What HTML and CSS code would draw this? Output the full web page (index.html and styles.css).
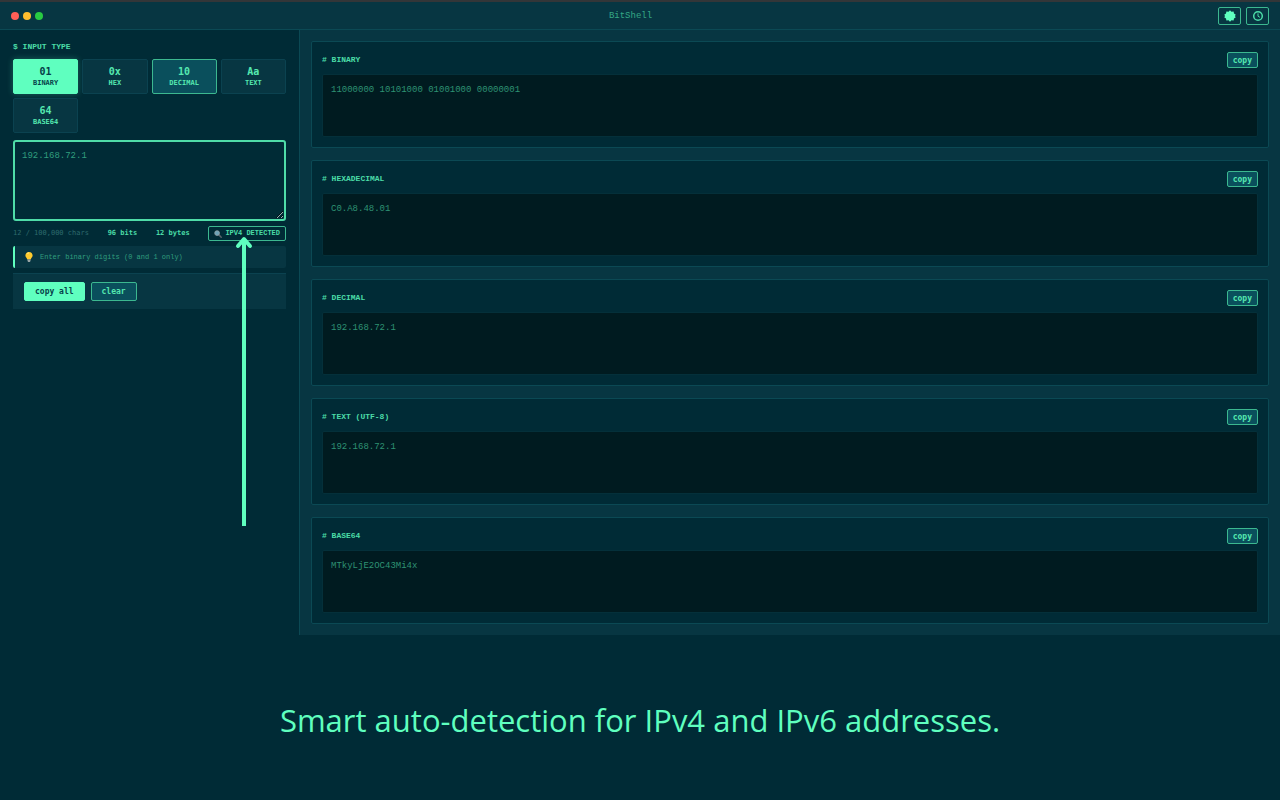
FILE: index.html
```html
<!DOCTYPE html>
<html lang="en">
<head>
    <meta charset="UTF-8">
    <meta name="viewport" content="width=device-width, initial-scale=1.0">
    <title>BitShell</title>
    <link rel="stylesheet" href="styles.css">
</head>
<body>
    <div class="window">
        <header class="titlebar">
            <div class="lights">
                <span class="light red"></span>
                <span class="light yellow"></span>
                <span class="light green"></span>
            </div>
            <h1 class="app-name">BitShell</h1>
            <div class="tools">
                <button class="tool" aria-label="Settings">
                    <svg width="12" height="12" viewBox="0 0 12 12"><path d="M6 .2 7.4 1.8 9.6 1.4 10 3.6 11.8 4.8 10.9 6 11.8 7.2 10 8.4 9.6 10.6 7.4 10.2 6 11.8 4.6 10.2 2.4 10.6 2 8.4.2 7.2 1.1 6 .2 4.8 2 3.6 2.4 1.4 4.6 1.8Z" fill="#5fffbf"/></svg>
                </button>
                <button class="tool" aria-label="History">
                    <svg width="12" height="12" viewBox="0 0 12 12" fill="none" stroke="#4bdca7"><circle cx="6" cy="6" r="4.3" stroke-width="1.5"/><path d="M6 3.4V6.2L7.9 7.3" stroke-width="1"/></svg>
                </button>
            </div>
        </header>

        <div class="content">
            <aside class="sidebar">
                <h2 class="label">$ INPUT TYPE</h2>
                <div class="types">
                    <button class="type active"><b>01</b><span>BINARY</span></button>
                    <button class="type"><b>0x</b><span>HEX</span></button>
                    <button class="type suggested"><b>10</b><span>DECIMAL</span></button>
                    <button class="type"><b>Aa</b><span>TEXT</span></button>
                    <button class="type"><b>64</b><span>BASE64</span></button>
                </div>
                <textarea class="input" aria-label="Input" spellcheck="false">192.168.72.1</textarea>
                <div class="stats">
                    <span class="chars">12 / 100,000 chars</span>
                    <span class="count">96 bits</span>
                    <span class="count">12 bytes</span>
                    <span class="badge">
                        <svg width="8" height="8" viewBox="0 0 8 8"><path d="M4.9 4.9 7.2 7.2" stroke="#59646b" stroke-width="1.5" stroke-linecap="round"/><circle cx="3.1" cy="3.1" r="2.4" fill="#6ba3b8" stroke="#96a5aa" stroke-width=".8"/></svg>
                        IPV4 DETECTED
                    </span>
                </div>
                <div class="hint">
                    <svg width="8" height="10" viewBox="0 0 8 10"><path d="M4 0C1.8 0 .4 1.6.4 3.5.4 5.2 2 6 2.3 7.5H5.7C6 6 7.6 5.2 7.6 3.5 7.6 1.6 6.2 0 4 0Z" fill="#ffcb2e"/><path d="M2.2 1.5Q3 .8 4 1" stroke="#fff3a8" stroke-width=".8" fill="none"/><path d="M2.5 7.5H5.5V9L4.8 10H3.2L2.5 9Z" fill="#9aa5a5"/></svg>
                    <span>Enter binary digits (0 and 1 only)</span>
                </div>
                <div class="actions">
                    <button class="btn primary">copy all</button>
                    <button class="btn">clear</button>
                </div>
            </aside>

            <main class="results">
                <section class="card">
                    <div class="card-head"><h2 class="label"># BINARY</h2><button class="copy">copy</button></div>
                    <div class="output">11000000 10101000 01001000 00000001</div>
                </section>
                <section class="card">
                    <div class="card-head"><h2 class="label"># HEXADECIMAL</h2><button class="copy">copy</button></div>
                    <div class="output">C0.A8.48.01</div>
                </section>
                <section class="card">
                    <div class="card-head"><h2 class="label"># DECIMAL</h2><button class="copy">copy</button></div>
                    <div class="output">192.168.72.1</div>
                </section>
                <section class="card">
                    <div class="card-head"><h2 class="label"># TEXT (UTF-8)</h2><button class="copy">copy</button></div>
                    <div class="output">192.168.72.1</div>
                </section>
                <section class="card">
                    <div class="card-head"><h2 class="label"># BASE64</h2><button class="copy">copy</button></div>
                    <div class="output">MTkyLjE2OC43Mi4x</div>
                </section>
            </main>
        </div>

        <svg class="arrow" width="18" height="290" viewBox="0 0 18 290" fill="none" stroke="#5fffbf" stroke-width="4"><path d="M9 290V3"/><path d="M3 10 9 3 15 10" stroke-linecap="round" stroke-linejoin="round"/></svg>
    </div>

    <p class="caption">Smart auto-detection for IPv4 and IPv6 addresses.</p>
</body>
</html>
```

FILE: styles.css
```css
* {
    box-sizing: border-box;
}
body {
    margin: 0;
    background: #002b36;
    color: #5fffbf;
    font-family: "Liberation Mono", "Courier New", monospace;
}
h1, h2, p {
    margin: 0;
}
button {
    font-family: "DejaVu Sans Mono", monospace;
    font-weight: bold;
    padding: 0;
    border-radius: 2px;
    color: #55e8b0;
    background: #0a4f5c;
    border: 1px solid #3cb890;
    cursor: pointer;
}
.window {
    position: relative;
    border-top: 2px solid #333638;
}

/* title bar */
.titlebar {
    display: flex;
    justify-content: space-between;
    align-items: center;
    height: 28px;
    padding: 0 11px;
    background: #073642;
    border-bottom: 1px solid #0b4954;
}
.lights {
    display: flex;
    gap: 4px;
}
.light {
    width: 8px;
    height: 8px;
    border-radius: 50%;
}
.red { background: #ff5f57; }
.yellow { background: #ffbd2e; }
.green { background: #28ca42; }
.app-name {
    font-size: 9px;
    font-weight: normal;
    color: #35a785;
}
.tools {
    display: flex;
    gap: 5px;
}
.tool {
    display: flex;
    align-items: center;
    justify-content: center;
    width: 23px;
    height: 18px;
    background: #073642;
}

.content {
    display: flex;
}

/* left side */
.sidebar {
    flex: 0 0 300px;
    padding: 13px;
    border-right: 1px solid #0b4954;
}
.label {
    font-size: 8px;
    line-height: 8px;
    color: #4bdca7;
}
.types {
    display: grid;
    grid-template-columns: repeat(4, 1fr);
    gap: 4px;
    margin: 8px 0 7px;
}
.type {
    display: flex;
    flex-direction: column;
    align-items: center;
    justify-content: center;
    height: 35px;
    background: #073642;
    border-color: #0b4250;
}
.type b {
    font-size: 10px;
    line-height: 12px;
}
.type span {
    font-size: 7px;
    line-height: 10px;
}
.type.active {
    background: #5fffbf;
    border-color: #5fffbf;
    color: #064149;
    box-shadow: 0 0 6px #5fffbf44;
}
.type.suggested {
    background: #0a4f5c;
    border-color: #3cb890;
}
.input {
    display: block;
    width: 100%;
    height: 81px;
    padding: 8px 7px;
    font: 9px/12px "Liberation Mono", monospace;
    color: #309e7e;
    background: #002b36;
    border: 2px solid #4fdca8;
    border-radius: 3px;
    outline: none;
}
.stats {
    display: flex;
    align-items: center;
    justify-content: space-between;
    margin: 5px 0;
    font: 7px/15px "DejaVu Sans Mono", monospace;
    white-space: nowrap;
}
.chars {
    color: #2c6a6d;
}
.count {
    font-weight: bold;
    color: #4bdca7;
}
.badge {
    display: flex;
    align-items: center;
    gap: 3px;
    padding: 0 5px;
    border: 1px solid #3cb890;
    border-radius: 2px;
    font: bold 7px/13px "Liberation Mono", monospace;
    color: #4bdca7;
}
.hint {
    display: flex;
    align-items: center;
    gap: 7px;
    height: 22px;
    padding-left: 10px;
    background: #073642;
    border-left: 2px solid #5fffbf;
    border-radius: 2px;
    font-size: 7px;
    color: #309e7e;
}
.actions {
    display: flex;
    gap: 6px;
    margin-top: 5px;
    padding: 8px 11px;
    background: #073642;
    border-top: 1px solid #0b4250;
}
.btn {
    height: 19px;
    padding: 0 10px;
    font-size: 8px;
}
.btn.primary {
    background: #5fffbf;
    border-color: #5fffbf;
    color: #064149;
}

/* converted values */
.results {
    flex: 1;
    display: flex;
    flex-direction: column;
    gap: 12px;
    padding: 11px;
    background: #073642;
}
.card {
    padding: 10px;
    background: #002b36;
    border: 1px solid #0b4954;
    border-radius: 2px;
}
.card-head {
    display: flex;
    align-items: center;
    justify-content: space-between;
    margin-bottom: 6px;
}
.copy {
    height: 16px;
    padding: 0 5px;
    font-size: 8px;
}
.output {
    min-height: 63px;
    padding: 9px 8px;
    font-size: 9px;
    line-height: 12px;
    color: #2e9273;
    background: #001b20;
    border: 1px solid #04303a;
    border-radius: 2px;
}

/* callout over the sidebar */
.arrow {
    position: absolute;
    left: 235px;
    top: 234px;
}
.caption {
    margin: 63px 20px;
    font: 31px/44px "Open Sans", sans-serif;
    text-align: center;
}
```
